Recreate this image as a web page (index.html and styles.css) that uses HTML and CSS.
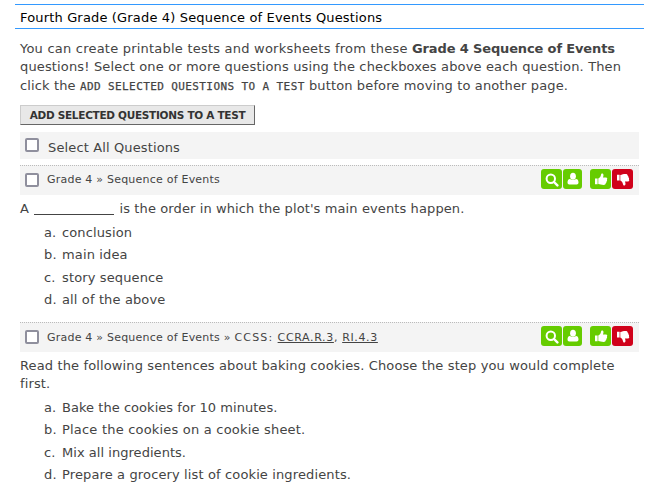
FILE: index.html
```
<!DOCTYPE html>
<html lang="en">
<head>
<meta charset="utf-8">
<title>Fourth Grade (Grade 4) Sequence of Events Questions</title>
<link rel="stylesheet" href="styles.css">
</head>
<body>
<svg class="defs" width="0" height="0" aria-hidden="true">
  <symbol id="search" viewBox="0 0 14 14"><circle cx="5.800" cy="5.800" r="4.200" fill="none" stroke="#fff" stroke-width="2"/><path d="M9 9l3.400 3.400" stroke="#fff" stroke-width="2.400" stroke-linecap="round"/></symbol>
  <symbol id="user" viewBox="0 0 14 14"><ellipse cx="7" cy="4.300" rx="2.900" ry="3.500" fill="#fff"/><path d="M4 7C2.200 7 1.500 8.600 1.500 10.500C1.500 11.800 2.200 12.500 3.300 12.500H10.700C11.800 12.500 12.500 11.800 12.500 10.500C12.500 8.600 11.800 7 10 7C8.500 8.400 5.500 8.400 4 7Z" fill="#fff"/></symbol>
  <symbol id="thumb" viewBox="0 0 14 14"><path d="M1 6.500H3.600V12.300H1ZM4.300 6.500C6 5.800 6.700 4.200 7 2.700C7.200 1 9.600 1 9.500 3.300C9.500 4.200 9.100 4.900 8.900 5.500H12C13.300 5.500 13.600 6.900 12.900 7.600C13.300 8.400 13 9.200 12.500 9.600C12.600 10.400 12.200 11 11.700 11.300C11.700 12.500 10.900 13 9.700 13C7.200 13 6.200 12.400 4.300 12.100Z" fill="#fff"/></symbol>
</svg>
<main class="page">
  <h1 class="title">Fourth Grade (Grade 4) Sequence of Events Questions</h1>
  <p class="intro">
    <span class="line l1">You can create printable tests and worksheets from these <b>Grade 4 Sequence of Events</b></span>
    <span class="line l2">questions! Select one or more questions using the checkboxes above each question. Then</span>
    <span class="line l3">click the <code>ADD SELECTED QUESTIONS TO A TEST</code> button before moving to another page.</span>
  </p>
  <button class="add" type="button">ADD SELECTED QUESTIONS TO A TEST</button>
  <label class="select-all"><input type="checkbox"><span>Select All Questions</span></label>

  <section class="question first">
    <header class="bar">
      <input type="checkbox">
      <span class="crumbs">Grade 4 <i>»</i> Sequence of Events</span>
      <span class="actions">
        <a class="btn"><svg><use href="#search"/></svg></a><a class="btn user"><svg><use href="#user"/></svg></a><a class="btn up"><svg><use href="#thumb"/></svg></a><a class="btn down"><svg><use href="#thumb"/></svg></a>
      </span>
    </header>
    <p class="prompt"><span class="line q1">A <span class="blank"></span> is the order in which the plot's main events happen.</span></p>
    <ol class="choices">
      <li>conclusion</li>
      <li>main idea</li>
      <li>story sequence</li>
      <li>all of the above</li>
    </ol>
  </section>

  <section class="question">
    <header class="bar">
      <input type="checkbox">
      <span class="crumbs standards">Grade 4 <i>»</i> Sequence of Events <i>»</i> <span class="ccss"><span class="label">CCSS:</span> <u>CCRA.R.3</u>, <u>RI.4.3</u></span></span>
      <span class="actions">
        <a class="btn"><svg><use href="#search"/></svg></a><a class="btn user"><svg><use href="#user"/></svg></a><a class="btn up"><svg><use href="#thumb"/></svg></a><a class="btn down"><svg><use href="#thumb"/></svg></a>
      </span>
    </header>
    <p class="prompt"><span class="line q2">Read the following sentences about baking cookies. Choose the step you would complete</span><span class="line">first.</span></p>
    <ol class="choices">
      <li class="tight">Bake the cookies for 10 minutes.</li>
      <li class="wide">Place the cookies on a cookie sheet.</li>
      <li class="tight">Mix all ingredients.</li>
      <li>Prepare a grocery list of cookie ingredients.</li>
    </ol>
  </section>
</main>
</body>
</html>
```
FILE: styles.css
```
* { box-sizing: border-box; }
body {
  margin: 0;
  background: #fff;
  color: #444;
  font: 13px/18px Verdana, "DejaVu Sans", sans-serif;
  letter-spacing: .13px;
  overflow: hidden;
}
.defs { display: block; height: 0; }
.page { width: 639px; padding: 4px 0 0 20px; }
.title {
  margin: 0 -5px 0 -5px;
  height: 25px;
  padding-left: 5px;
  border-top: 1px solid #39f;
  border-bottom: 1px solid #39f;
  color: #000;
  font-size: 13px;
  font-weight: normal;
  line-height: 25px;
  letter-spacing: .16px;
}
.line { display: block; white-space: nowrap; }
.intro { margin: 11px 0 0; }
.l1 { letter-spacing: .22px; }
.l1 b { letter-spacing: -.14px; }
.l2 { letter-spacing: .15px; }
.l3 { line-height: 20px; }
code {
  font: 11px/18px "DejaVu Sans Mono", monospace;
  letter-spacing: .4px;
  -webkit-text-stroke: .25px #444;
}
.add {
  display: block;
  width: 235px;
  height: 20px;
  margin-top: 9px;
  padding: 1px 0 0;
  border: 1px solid;
  border-color: #ccc #666 #666 #ccc;
  background: #e8e8e8;
  color: #333;
  font: bold 10.5px/17px Verdana, "DejaVu Sans", sans-serif;
  letter-spacing: -.29px;
  white-space: nowrap;
}
input {
  appearance: none;
  flex: none;
  width: 14px;
  height: 14px;
  margin: 0;
  border: 2px solid #8f8f9d;
  border-radius: 2px;
  background: #fff;
}
.select-all {
  display: flex;
  height: 27px;
  margin-top: 7px;
  padding: 6px 0 0 5px;
  background: #f4f4f4;
}
.select-all span { margin: 1px 0 0 9px; letter-spacing: .13px; }
.question { margin-top: 11px; }
.question.first { margin-top: 6px; }
.bar {
  display: flex;
  height: 30px;
  padding: 7px 6px 0 5px;
  border-top: 1px dotted #bbb;
  background: #f4f4f4;
}
.crumbs { margin: -2px 0 0 8px; font-size: 11px; letter-spacing: .22px; white-space: nowrap; }
.crumbs.standards { margin-top: -1px; }
.ccss { letter-spacing: .64px; }
.ccss .label { letter-spacing: 1.2px; }
.crumbs i { font-style: normal; }
.crumbs u { text-decoration: underline; }
.actions { display: flex; margin: -4px 0 0 auto; }
.btn {
  display: flex;
  align-items: center;
  justify-content: center;
  width: 21px;
  height: 20px;
  padding-top: 1px;
  border-radius: 3px;
  background: #6c0;
}
.btn svg { width: 14px; height: 14px; }
.btn.user { width: 19px; margin-left: 1px; padding-top: 0; }
.btn.up { margin-left: 8px; padding-top: 0; }
.btn.down { margin-left: 1px; background: #d0021b; }
.btn.down svg { transform: scaleY(-1); }
.prompt { margin: 5px 0 0; }
.blank { display: inline-block; width: 80px; height: 1px; margin: 0 1px; background: #444; vertical-align: -2px; }
.q1 { letter-spacing: .11px; }
.choices { margin: 4px 0 0; padding: 0 0 0 24px; list-style: none; counter-reset: c; }
.choices li { height: 22.3px; line-height: 22px; counter-increment: c; white-space: nowrap; }
.choices li::before { content: counter(c, lower-alpha) ". "; display: inline-block; width: 18px; }
.choices .wide { letter-spacing: .2px; }
.choices .tight { letter-spacing: .04px; }
```
